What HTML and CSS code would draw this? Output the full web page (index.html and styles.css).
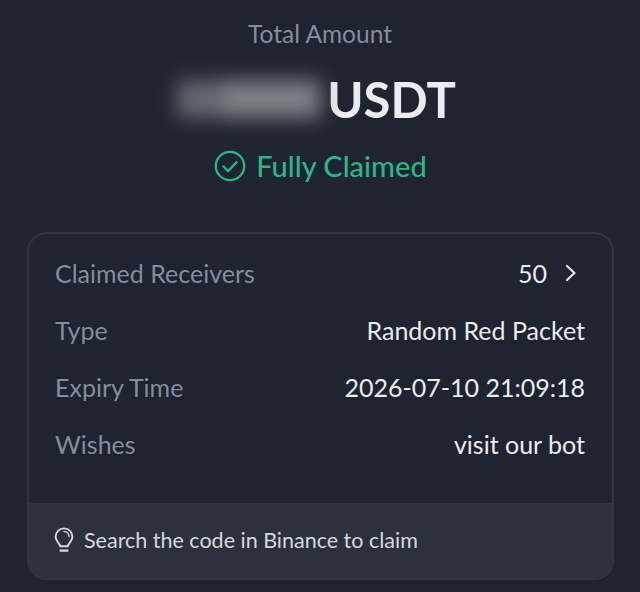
FILE: index.html
```html
<!DOCTYPE html>
<html lang="en">
<head>
    <meta charset="UTF-8">
    <meta name="viewport" content="width=device-width, initial-scale=1.0">
    <title>Red Packet Details</title>
    <link rel="stylesheet" href="styles.css">
</head>
<body>

<div class="summary">
    <div class="total-label">Total Amount</div>
    <div class="amount">
        <div class="amount-blur">
            <span class="blob blob-small"></span>
            <span class="blob blob-large"></span>
        </div>
        <span class="currency">USDT</span>
    </div>
    <div class="status">
        <svg class="status-icon" viewBox="0 0 32 32" fill="none">
            <circle cx="16" cy="16" r="14.2" stroke="#2fb585" stroke-width="2.3"/>
            <path d="M9.5 16.5l4.6 4.6 8.6-9" stroke="#2fb585" stroke-width="2.3" stroke-linecap="round" stroke-linejoin="round"/>
        </svg>
        <span>Fully Claimed</span>
    </div>
</div>

<div class="card">
    <div class="rows">
        <div class="row">
            <span class="row-label">Claimed Receivers</span>
            <span class="row-value receivers">
                50
                <svg class="chevron" viewBox="0 0 12 18" fill="none">
                    <path d="M2 2l7.5 7L2 16" stroke="#eaecef" stroke-width="2.2" stroke-linecap="round" stroke-linejoin="round"/>
                </svg>
            </span>
        </div>
        <div class="row">
            <span class="row-label">Type</span>
            <span class="row-value">Random Red Packet</span>
        </div>
        <div class="row">
            <span class="row-label">Expiry Time</span>
            <span class="row-value">2026-07-10 21:09:18</span>
        </div>
        <div class="row">
            <span class="row-label">Wishes</span>
            <span class="row-value">visit our bot</span>
        </div>
    </div>
    <div class="hint">
        <svg class="hint-icon" viewBox="0 0 20 26" fill="none">
            <path d="M6.2 19.2c0-2.4-4.6-4.6-4.6-9.4a8.4 8.4 0 0 1 16.8 0c0 4.8-4.6 7-4.6 9.4z" stroke="#d5d9df" stroke-width="1.9" stroke-linejoin="round"/>
            <path d="M10 4.6c2.8 0 5 2.2 5 5" stroke="#d5d9df" stroke-width="1.5" stroke-linecap="round"/>
            <path d="M5.6 23.6h8.8" stroke="#d5d9df" stroke-width="2.2"/>
        </svg>
        <span>Search the code in Binance to claim</span>
    </div>
</div>

</body>
</html>
```

FILE: styles.css
```css
body {
    margin: 0;
    width: 640px;
    height: 592px;
    overflow: hidden;
    background-color: #1e2430;
    font-family: "Lato", "Liberation Sans", sans-serif;
    color: #eaecef;
}
.summary {
    display: flex;
    flex-direction: column;
    align-items: center;
    padding-top: 19px;
}
.total-label {
    font-size: 24.5px;
    line-height: 30px;
    color: #848e9c;
}
.amount {
    display: flex;
    align-items: center;
    justify-content: center;
    height: 62px;
    margin-top: 19px;
    padding-right: 7px;
}
.amount-blur {
    display: flex;
    align-items: center;
    gap: 2px;
    width: 146px;
    height: 44px;
    margin-right: 4px;
    filter: blur(10px);
}
.blob {
    display: block;
    height: 38px;
    background-color: #7d8085;
}
.blob-small {
    width: 38px;
    background-color: #666a71;
}
.blob-large {
    width: 104px;
}
.currency {
    font-size: 49px;
    font-weight: 700;
    line-height: 62px;
    color: #eaecef;
}
.status {
    display: flex;
    align-items: center;
    gap: 10px;
    margin-top: 18px;
    padding-left: 1px;
    font-size: 29px;
    font-weight: 500;
    line-height: 36px;
    color: #2fb585;
}
.status-icon {
    width: 32px;
    height: 32px;
}
.card {
    box-sizing: border-box;
    width: 587px;
    height: 348px;
    margin: 48px 0 0 27px;
    border: 2px solid #2f3641;
    border-radius: 20px;
    overflow: hidden;
}
.rows {
    box-sizing: border-box;
    height: 269px;
    padding: 10px 27px 0 26px;
}
.row {
    display: flex;
    justify-content: space-between;
    align-items: center;
    height: 57px;
    font-size: 25px;
}
.row-label {
    color: #848e9c;
}
.row-value {
    color: #eaecef;
}
.receivers {
    display: flex;
    align-items: center;
    gap: 18px;
    padding-right: 8px;
}
.chevron {
    width: 12px;
    height: 18px;
}
.hint {
    display: flex;
    align-items: center;
    gap: 10px;
    height: 75px;
    padding: 0 0 1px 25px;
    box-sizing: border-box;
    background-color: #2b323d;
    font-size: 21.5px;
    color: #d5d9df;
}
.hint-icon {
    width: 20px;
    height: 26px;
}
```
